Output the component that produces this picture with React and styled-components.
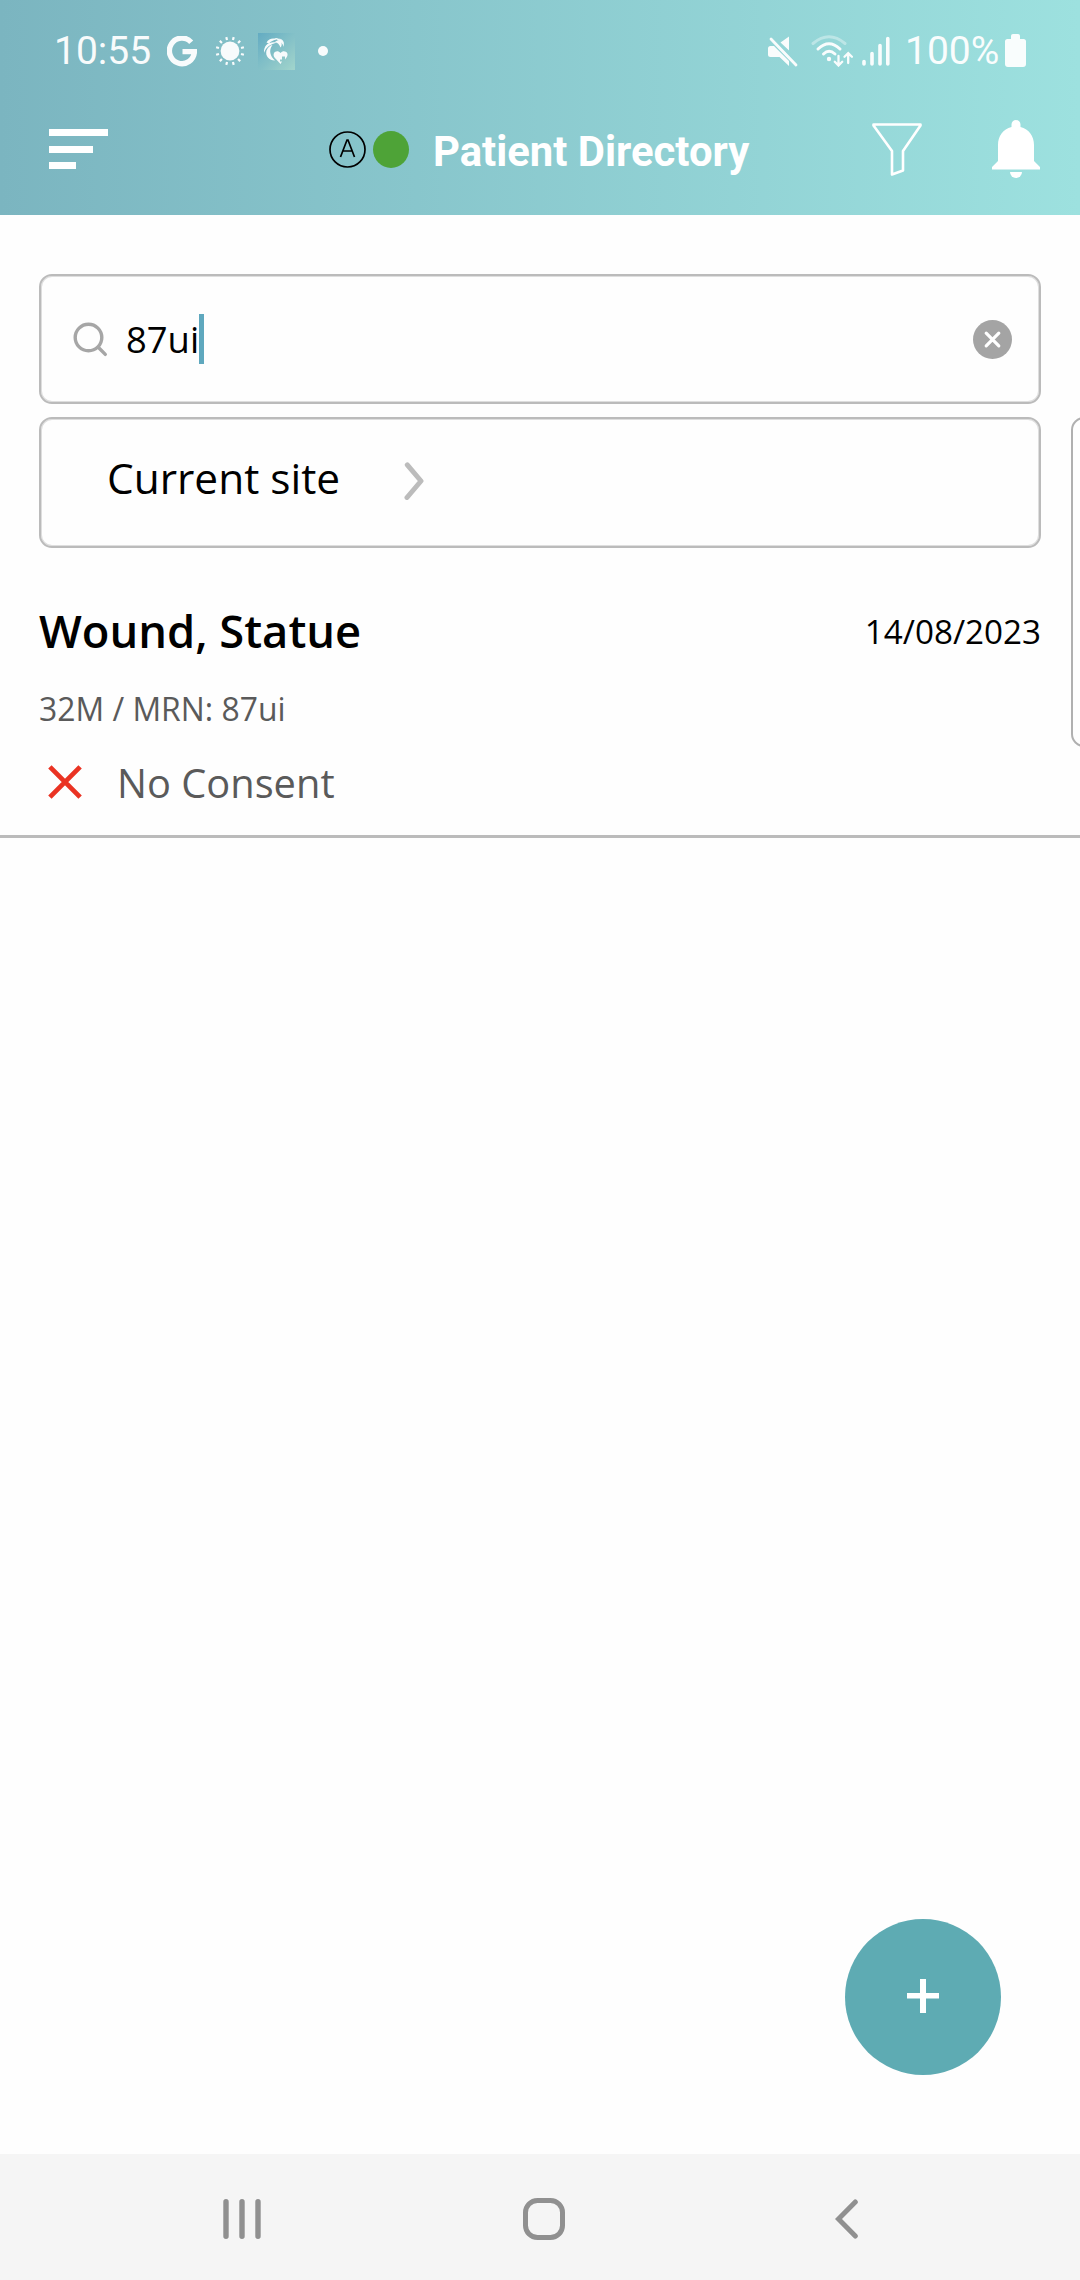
import React from "react";
import styled, { createGlobalStyle } from "styled-components";

const Global = createGlobalStyle`
  * { box-sizing: border-box; }
  body { margin: 0; background: #fff; font-family: "Open Sans", "Noto Sans", sans-serif; }
  svg { display: block; flex: none; }
`;

const Screen = styled.div`
  position: relative;
  display: flex;
  flex-direction: column;
  width: 1080px;
  height: 2280px;
  overflow: hidden;
  background: #fefefe;
`;

const Header = styled.header`
  flex: none;
  height: 215px;
  background: linear-gradient(90deg, #7bb5c0 0%, #9de1df 100%);
  color: #fff;
  font-family: Roboto, sans-serif;
`;

const StatusBar = styled.div`
  display: flex;
  justify-content: space-between;
  height: 102px;
  padding: 0 54px 0 54px;
`;

const StatusGroup = styled.div`
  display: flex;
  align-items: center;
  opacity: 0.95;
`;

const StatusText = styled.span`
  width: ${(p) => p.$width}px;
  font-size: 39px;
  line-height: 102px;
  white-space: nowrap;
`;

const Gap = styled.span`
  flex: none;
  width: ${(p) => p.$size}px;
`;

const Toolbar = styled.div`
  display: flex;
  align-items: center;
  height: 94px;
  padding: 0 40px 0 49px;
`;

const MenuButton = styled.div`
  display: flex;
  flex-direction: column;
  gap: 9.5px;
  width: 280px;
`;

const MenuBar = styled.span`
  width: ${(p) => p.$width}px;
  height: 7px;
  background: #fff;
`;

const OnlineDot = styled.span`
  width: 36px;
  height: 37px;
  margin: 0 24px 0 7px;
  border-radius: 50%;
  background: #4ea337;
`;

const Title = styled.h1`
  width: 439px;
  margin: 0;
  padding-top: 5px;
  font-size: 41.8px;
  line-height: 50px;
  font-weight: 700;
  white-space: nowrap;
`;

const Filters = styled.section`
  position: relative;
  display: flex;
  flex-direction: column;
  gap: 13px;
  padding: 59px 39px 0;
`;

const Field = styled.div`
  display: flex;
  align-items: center;
  height: 130px;
  border: 2px solid #bbb;
  border-radius: 13px;
  box-shadow: inset 0 0 0 1px #dedede;
`;

const SearchField = styled(Field)`
  padding: 0 27px 0 32px;
`;

const SiteField = styled(Field)`
  height: 131px;
  padding: 0 66px 3px;
`;

const Query = styled.span`
  width: 73px;
  margin-left: 17px;
  padding-bottom: 1px;
  font-size: 36.4px;
  line-height: 50px;
  color: #000;
`;

const Caret = styled.span`
  width: 5px;
  height: 50px;
  margin: 0 auto 1px 0;
  background: #5fa8be;
`;

const SiteLabel = styled.span`
  width: 297px;
  padding-bottom: 7px;
  font-size: 42.4px;
  color: #000;
`;

const NextCard = styled.div`
  position: absolute;
  top: 202px;
  left: 1071px;
  width: 1002px;
  height: 330px;
  border: 2px solid #b0b0b0;
  border-radius: 13px;
`;

const Patient = styled.article`
  display: flex;
  flex-direction: column;
  height: 290px;
  padding: 53px 39px 0;
  border-bottom: 3px solid #bbb;
`;

const PatientTop = styled.div`
  display: flex;
  justify-content: space-between;
  height: 62px;
`;

const PatientName = styled.h2`
  margin: 0;
  font-size: 45.3px;
  line-height: 60px;
  font-weight: 600;
  color: #000;
`;

const VisitDate = styled.span`
  font-size: 33.2px;
  line-height: 62px;
  color: #000;
`;

const Details = styled.div`
  margin-top: 16px;
  font-size: 31.9px;
  line-height: 60px;
  color: #5a5a5a;
`;

const Consent = styled.div`
  display: flex;
  align-items: center;
  gap: 35px;
  margin-top: 14px;
  padding-left: 9px;
  font-size: 39.8px;
  line-height: 60px;
  color: #5a5a5a;
`;

const FabArea = styled.div`
  display: flex;
  flex: 1;
  align-items: flex-end;
  justify-content: flex-end;
  padding: 0 79px 79px 0;
`;

const Fab = styled.div`
  display: flex;
  align-items: center;
  justify-content: center;
  width: 156px;
  height: 156px;
  padding-bottom: 2px;
  border-radius: 50%;
  background: #5eabb3;
`;

const NavBar = styled.nav`
  display: flex;
  flex: none;
  align-items: center;
  height: 126px;
  padding: 4px 0 0 223px;
  background: #f5f5f5;
`;

const rays = Array.from({ length: 12 }, (_, i) => 15 + i * 30);

const GoogleG = () => (
  <svg width="30" height="31" viewBox="0 0 30 31" fill="none" stroke="#fff" strokeWidth="5.4">
    <path d="M24.2 6.3A12.5 12.8 0 1 0 27.4 15.6H15.5" />
  </svg>
);

const Sun = () => (
  <svg width="30" height="30" viewBox="0 0 30 30">
    <circle cx="15" cy="15" r="9.4" fill="#fff" />
    {rays.map((a) => (
      <path key={a} d="M15 .6v3" transform={`rotate(${a} 15 15)`} stroke="#fff" strokeWidth="2.2" />
    ))}
  </svg>
);

const AppBadge = () => (
  <svg width="37" height="37" viewBox="0 0 37 37">
    <defs>
      <linearGradient id="badge" x1="0" y1="0" x2="1" y2="1">
        <stop offset="0" stopColor="#62abc2" />
        <stop offset="1" stopColor="#a4d6cd" />
      </linearGradient>
    </defs>
    <path fill="url(#badge)" d="M0 0h37v37H0z" />
    <g fill="#fff">
      <path d="M8.500 9.500C10.500 6 15 4.500 19 6.500 15.500 7 12.500 8.500 11 10.500z" />
      <path d="M16 5c6 0 10 2.500 10 9-1.500-4-4.500-6.500-10-9z" />
      <path d="M21 5.500c3 .5 5.500 2.500 5 7.500-.5-3-2.500-5.500-5-7.500z" />
      <path d="M6 20C5.500 12 11 8 19 9.500 12.500 11 8 14 6 20z" />
      <path d="M8.500 17.500C10 14 12 12.500 14.500 12 10.500 17 12 23 17 27.500 11 27.500 7 23 8.500 17.500z" />
      <path d="M17 9c2.500.5 4.500 2.500 5.500 5.500 1.500-1.500 1.500-4 .5-6.500-1.500-1.500-4-1-6 1z" />
      <path d="M22.500 31l-6-6.500c-3-4.500 2.500-8.500 6-4.500 3.500-4 9.500 0 6 4.500l-1.500 2v-3h-3v3h-2v2h2z" />
    </g>
  </svg>
);

const Mute = () => (
  <svg width="30" height="31" viewBox="0 0 30 31" fill="#fff">
    <path d="M12.500 6.500L21 .5V14.500z" />
    <path d="M2.500 10H6L21 25V30L11.500 21H2.500Q0 21 0 18.500V12.500Q0 10 2.500 10z" />
    <path d="M3 3l25 26" stroke="#fff" strokeWidth="2.800" strokeLinecap="round" />
  </svg>
);

const Wifi = () => (
  <svg width="42" height="32" viewBox="0 0 42 32" fill="none" stroke="#fff" strokeWidth="3" strokeLinecap="round">
    <path d="M2 8.500Q18-5 34 8.500" opacity=".4" />
    <path d="M7 14Q18 3.500 29 14M12.500 19Q18 13.500 24 19" />
    <circle cx="18" cy="24" r="2.200" fill="#fff" stroke="none" />
    <path d="M27.500 21v9M23.800 26.800l3.700 3.700 3.700-3.700M37.200 28v-9.500M33.500 21.800l3.700-3.700 3.700 3.700" strokeWidth="2.300" />
  </svg>
);

const Signal = () => (
  <svg width="28" height="30" viewBox="0 0 28 30" stroke="#fff" strokeWidth="3.600" strokeLinecap="round">
    <path d="M2 25.500v2.500M10 17.500V28M18 9.500V28M25.800 2.500V28" />
  </svg>
);

const Battery = () => (
  <svg width="21" height="35" viewBox="0 0 21 35" fill="#fff">
    <path d="M6 2Q6 0 8 0h5q2 0 2 2v3h3.500Q21 5 21 7.500V30q0 3-3 3H3q-3 0-3-3V7.500Q0 5 2.500 5H6z" />
  </svg>
);

const ModeA = () => (
  <svg width="37" height="37" viewBox="0 0 37 37" fill="none" stroke="#000" strokeWidth="1.700">
    <circle cx="18.500" cy="18.500" r="17.500" />
    <path d="M11.500 26L18 9h1l6.500 17M14 20h9" />
  </svg>
);

const Funnel = () => (
  <svg width="50" height="53" viewBox="0 0 50 53" fill="none" stroke="#fff" strokeWidth="2.600" strokeLinejoin="round">
    <path d="M1.500 1.500h47v1L31 28v19.500l-11 4V28L1.500 2.500z" />
  </svg>
);

const Bell = () => (
  <svg width="48" height="58" viewBox="0 0 48 58" fill="#fff">
    <path d="M19.500 7V4.500a4.500 4.500 0 0 1 9 0V7C37 9 42 16 42 25V41l6 6v2.500H0V47l6-6V25C6 16 11 9 19.500 7z" />
    <path d="M18 52h12a6 6 0 0 1-12 0z" />
  </svg>
);

const Magnifier = () => (
  <svg width="36" height="36" viewBox="0 0 36 36" fill="none" stroke="#a6a6a6" strokeWidth="3.400" strokeLinecap="round">
    <circle cx="15.500" cy="16.500" r="13.300" />
    <path d="M25.500 26.500l6.800 6.900" />
  </svg>
);

const Clear = () => (
  <svg width="39" height="39" viewBox="0 0 39 39">
    <circle cx="19.500" cy="19.500" r="19.500" fill="#a4a4a4" />
    <path d="M13.200 13.200l12.600 12.600M25.800 13.200L13.200 25.800" stroke="#fff" strokeWidth="3.200" strokeLinecap="round" />
  </svg>
);

const Chevron = () => (
  <svg width="20" height="38" viewBox="0 0 20 38" fill="none" stroke="#bcbcbc" strokeWidth="5" strokeLinecap="round" strokeLinejoin="round">
    <path d="M3.300 2.800L17 19 3 35.500" />
  </svg>
);

const Cross = () => (
  <svg width="34" height="36" viewBox="0 0 34 36" stroke="#ea3323" strokeWidth="4.800">
    <path d="M1.900 1.900l30.200 30.200M32.100 1.900L1.900 32.100" />
  </svg>
);

const Plus = () => (
  <svg width="32" height="34" viewBox="0 0 32 34" fill="#fff">
    <path d="M13 0h6v14h13v5.500H19V34h-6V19.500H0V14h13z" />
  </svg>
);

const Recents = () => (
  <svg width="38" height="40" viewBox="0 0 38 40" stroke="#909090" strokeWidth="5.400" strokeLinecap="round">
    <path d="M3 2.700v34.500M19 2.700v34.500M35 2.700v34.500" />
  </svg>
);

const Home = () => (
  <svg width="42" height="42" viewBox="0 0 42 42" fill="none" stroke="#909090" strokeWidth="5">
    <rect x="2.500" y="2.500" width="37" height="37" rx="12" />
  </svg>
);

const Back = () => (
  <svg width="24" height="40" viewBox="0 0 24 40" fill="none" stroke="#909090" strokeWidth="5" strokeLinecap="round">
    <path d="M20.300 3L3.500 20l16.800 17" />
  </svg>
);

export default function App() {
  return (
    <Screen>
      <Global />
      <Header>
        <StatusBar>
          <StatusGroup>
            <StatusText $width={113}>10:55</StatusText>
            <GoogleG />
            <Gap $size={18} />
            <Sun />
            <Gap $size={13} />
            <AppBadge />
            <Gap $size={23} />
            <svg width="10" height="10" viewBox="0 0 10 10"><circle cx="5" cy="5" r="5" fill="#fff" /></svg>
          </StatusGroup>
          <StatusGroup>
            <Mute />
            <Gap $size={13} />
            <Wifi />
            <Gap $size={9} />
            <Signal />
            <Gap $size={15} />
            <StatusText $width={100}>100%</StatusText>
            <Battery />
          </StatusGroup>
        </StatusBar>
        <Toolbar>
          <MenuButton>
            <MenuBar $width={58.5} />
            <MenuBar $width={43.5} />
            <MenuBar $width={27} />
          </MenuButton>
          <ModeA />
          <OnlineDot />
          <Title>Patient Directory</Title>
          <Funnel />
          <Gap $size={70} />
          <Bell />
        </Toolbar>
      </Header>
      <Filters>
        <SearchField>
          <Magnifier />
          <Query>87ui</Query>
          <Caret />
          <Clear />
        </SearchField>
        <SiteField>
          <SiteLabel>Current site</SiteLabel>
          <Chevron />
        </SiteField>
        <NextCard />
      </Filters>
      <Patient>
        <PatientTop>
          <PatientName>Wound, Statue</PatientName>
          <VisitDate>14/08/2023</VisitDate>
        </PatientTop>
        <Details>32M / MRN: 87ui</Details>
        <Consent>
          <Cross />
          <span>No Consent</span>
        </Consent>
      </Patient>
      <FabArea>
        <Fab>
          <Plus />
        </Fab>
      </FabArea>
      <NavBar>
        <Recents />
        <Gap $size={262} />
        <Home />
        <Gap $size={270} />
        <Back />
      </NavBar>
    </Screen>
  );
}
